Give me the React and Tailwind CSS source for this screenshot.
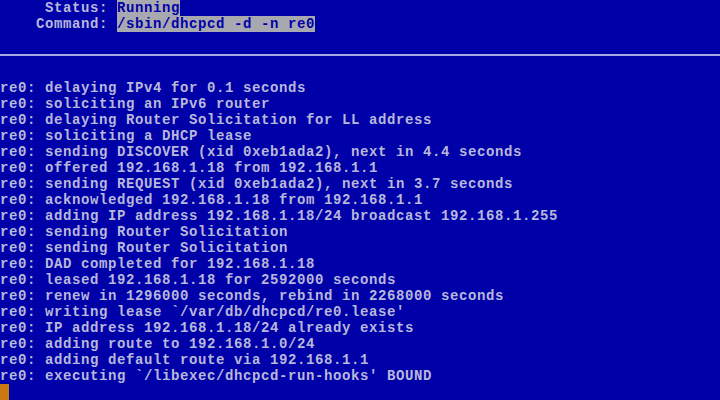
import React from 'react';

const logLines = [
  "re0: delaying IPv4 for 0.1 seconds",
  "re0: soliciting an IPv6 router",
  "re0: delaying Router Solicitation for LL address",
  "re0: soliciting a DHCP lease",
  "re0: sending DISCOVER (xid 0xeb1ada2), next in 4.4 seconds",
  "re0: offered 192.168.1.18 from 192.168.1.1",
  "re0: sending REQUEST (xid 0xeb1ada2), next in 3.7 seconds",
  "re0: acknowledged 192.168.1.18 from 192.168.1.1",
  "re0: adding IP address 192.168.1.18/24 broadcast 192.168.1.255",
  "re0: sending Router Solicitation",
  "re0: sending Router Solicitation",
  "re0: DAD completed for 192.168.1.18",
  "re0: leased 192.168.1.18 for 2592000 seconds",
  "re0: renew in 1296000 seconds, rebind in 2268000 seconds",
  "re0: writing lease `/var/db/dhcpcd/re0.lease'",
  "re0: IP address 192.168.1.18/24 already exists",
  "re0: adding route to 192.168.1.0/24",
  "re0: adding default route via 192.168.1.1",
  "re0: executing `/libexec/dhcpcd-run-hooks' BOUND",
];

function Row({ children }) {
  return <div className="h-4 leading-4 whitespace-pre">{children}</div>;
}

export default function App() {
  return (
    <div className="w-[720px] h-[400px] overflow-hidden bg-[#0000a8] text-[#b8b8dc] font-['Liberation_Mono',monospace] text-[14px] tracking-[0.6px] font-bold">
      <div className="flex flex-col">
        <Row>
          {"     Status: "}
          <span className="bg-[#a8a8b0] text-[#0000a8]">Running</span>
        </Row>
        <Row>
          {"    Command: "}
          <span className="bg-[#a8a8b0] text-[#0000a8]">/sbin/dhcpcd -d -n re0</span>
        </Row>
        <Row>{" "}</Row>
        <div className="h-4 pb-[2px] flex items-center">
          <div className="w-full h-[2px] bg-[#a8a8e4]" />
        </div>
        <Row>{" "}</Row>
        {logLines.map((line, i) => (
          <Row key={i}>{line}</Row>
        ))}
        <div className="h-4">
          <div className="w-[9px] h-4 bg-[#c87a10]" />
        </div>
      </div>
    </div>
  );
}
